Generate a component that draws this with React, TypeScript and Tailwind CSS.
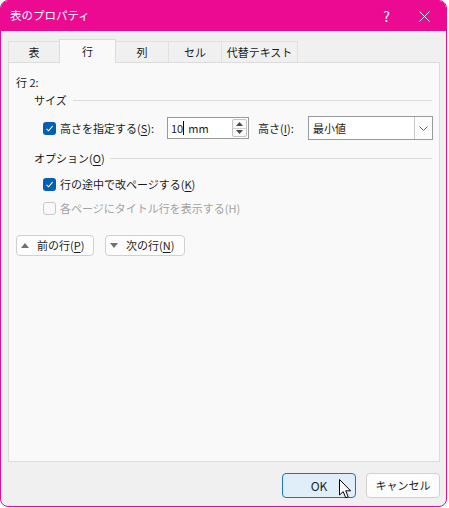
import React from "react";

const font = { fontFamily: '"Noto Sans CJK JP", "Noto Sans", sans-serif' };

function Key({ k }: { k: string }) {
  return <span className="underline underline-offset-[2px] decoration-[1px]">{k}</span>;
}

function Check({ checked, disabled }: { checked?: boolean; disabled?: boolean }) {
  if (checked) {
    return (
      <span className="flex h-[13px] w-[13px] shrink-0 items-center justify-center rounded-[3px] bg-[#005fb8]">
        <svg width="9" height="9" viewBox="0 0 9 9">
          <path d="M1.5 4.8 L3.6 6.8 L7.6 2.2" fill="none" stroke="white" strokeWidth="1.1" />
        </svg>
      </span>
    );
  }
  return (
    <span
      className={
        "h-[13px] w-[13px] shrink-0 rounded-[3px] border bg-[#f9f9f9] " +
        (disabled ? "border-[#c8c8c8]" : "border-[#868686]")
      }
    />
  );
}

function Tab({ label, active, w }: { label: string; active?: boolean; w: string }) {
  if (active) {
    return (
      <div
        className={
          "relative z-10 -mb-px flex h-[24px] items-center justify-center border border-b-0 border-[#dcdcdc] bg-[#f9f9f9] " + w
        }
      >
        {label}
      </div>
    );
  }
  return (
    <div
      className={
        "flex h-[21px] items-center justify-center border border-b-0 border-l-0 border-[#e0e0e0] bg-[#f0f0f0] first:border-l " + w
      }
    >
      {label}
    </div>
  );
}

export default function App() {
  return (
    <div className="h-[508px] w-[449px] bg-white text-[11px] text-[#1b1b1b]" style={font}>
      <div className="flex h-[507px] w-[447px] flex-col overflow-hidden rounded-[8px] border border-[#ec0a93] bg-[#f0f0f0]">
        {/* Title bar */}
        <div className="flex h-[30px] shrink-0 items-center bg-[#ec0a93] pl-[9px] text-white">
          <span className="text-[11.5px]">表のプロパティ</span>
          <span className="ml-auto mr-[29px] text-[14px]">?</span>
          <svg width="11" height="11" viewBox="0 0 11 11" className="mr-[16px]">
            <path d="M0.5 0.5 L10.5 10.5 M10.5 0.5 L0.5 10.5" stroke="white" strokeWidth="1" />
          </svg>
        </div>

        <div className="flex flex-1 flex-col pl-[7px] pt-[8px]">
          {/* Tabs */}
          <div className="flex h-[23px] items-end">
            <Tab label="表" w="w-[52px] border-l" />
            <Tab label="行" active w="w-[57px] -ml-px" />
            <Tab label="列" w="w-[53px]" />
            <Tab label="セル" w="w-[53px]" />
            <Tab label="代替テキスト" w="w-[76px]" />
          </div>

          {/* Panel */}
          <div className="flex h-[400px] w-[432px] flex-col border border-[#dcdcdc] bg-[#f9f9f9]">
            <div className="mt-[11px] flex h-[16px] items-center pl-[7px]">行 2:</div>

            <div className="mt-[2px] flex h-[16px] items-center pl-[25px] pr-[7px]">
              <span>サイズ</span>
              <div className="ml-[6px] h-px flex-1 bg-[#dcdcdc]" />
            </div>

            <div className="mt-[8px] flex h-[24px] items-center pl-[34px]">
              <div className="flex w-[124px] items-center">
                <Check checked />
                <span className="ml-[4px]">
                  高さを指定する(<Key k="S" />):
                </span>
              </div>
              <div className="flex h-[22px] w-[82px] items-center border border-[#9a9a9a] bg-white pl-[3px]">
                <span>10</span>
                <span className="h-[14px] w-px bg-black" />
                <span className="ml-[4px]">mm</span>
                <div className="ml-auto mr-px flex h-[18px] w-[15px] flex-col rounded-[2px] border border-[#c4c4c4] bg-[#fbfbfb]">
                  <div className="flex flex-1 items-center justify-center border-b border-[#d0d0d0]">
                    <svg width="7" height="4" viewBox="0 0 7 4">
                      <path d="M0 4 L3.5 0 L7 4 Z" fill="#4a4a4a" />
                    </svg>
                  </div>
                  <div className="flex flex-1 items-center justify-center">
                    <svg width="7" height="4" viewBox="0 0 7 4">
                      <path d="M0 0 L3.5 4 L7 0 Z" fill="#4a4a4a" />
                    </svg>
                  </div>
                </div>
              </div>
              <span className="ml-[9px] w-[50px]">
                高さ(<Key k="I" />):
              </span>
              <div className="flex h-[24px] w-[125px] items-center border border-[#9a9a9a] bg-white">
                <span className="pl-[4px]">最小値</span>
                <div className="ml-auto flex h-full w-[18px] items-center justify-center border-l border-[#c8c8c8] bg-[#fdfdfd]">
                  <svg width="9" height="5" viewBox="0 0 9 5">
                    <path d="M0.5 0.5 L4.5 4.5 L8.5 0.5" fill="none" stroke="#606060" strokeWidth="1" />
                  </svg>
                </div>
              </div>
            </div>

            <div className="mt-[10px] flex h-[16px] items-center pl-[25px] pr-[7px]">
              <span>
                オプション(<Key k="O" />)
              </span>
              <div className="ml-[5px] h-px flex-1 bg-[#dcdcdc]" />
            </div>

            <div className="mt-[10px] flex h-[16px] items-center pl-[34px]">
              <Check checked />
              <span className="ml-[4px]">
                行の途中で改ページする(<Key k="K" />)
              </span>
            </div>

            <div className="mt-[8px] flex h-[16px] items-center pl-[34px] text-[#a2a2a2]">
              <Check disabled />
              <span className="ml-[4px]">各ページにタイトル行を表示する(H)</span>
            </div>

            <div className="mt-[19px] flex items-center gap-[11px] pl-[7px]">
              <div className="flex h-[21px] w-[78px] items-center rounded-[4px] border border-[#d0d0d0] bg-[#fdfdfd] pl-[4px]">
                <svg width="8" height="5" viewBox="0 0 8 5">
                  <path d="M0 5 L4 0 L8 5 Z" fill="#707070" />
                </svg>
                <span className="ml-[8px]">
                  前の行(<Key k="P" />)
                </span>
              </div>
              <div className="flex h-[21px] w-[80px] items-center rounded-[4px] border border-[#d0d0d0] bg-[#fdfdfd] pl-[4px]">
                <svg width="8" height="5" viewBox="0 0 8 5">
                  <path d="M0 0 L4 5 L8 0 Z" fill="#707070" />
                </svg>
                <span className="ml-[8px]">
                  次の行(<Key k="N" />)
                </span>
              </div>
            </div>
          </div>

          {/* Footer buttons */}
          <div className="mt-[11px] flex w-[432px] justify-end gap-[10px]">
            <div className="relative flex h-[25px] w-[74px] items-center justify-center rounded-[4px] border border-[#1a73c8] bg-[#e0eef9] text-[12px]">
              OK
              <svg
                width="13"
                height="20"
                viewBox="0 0 13 20"
                className="absolute left-[56px] top-[5px]"
              >
                <path
                  d="M0.5 0.5 L0.5 16 L4.2 12.6 L6.8 18.8 L9.2 17.8 L6.7 11.8 L11.6 11.8 Z"
                  fill="white"
                  stroke="black"
                  strokeWidth="1"
                  strokeLinejoin="round"
                />
              </svg>
            </div>
            <div className="flex h-[25px] w-[74px] items-center justify-center rounded-[4px] border border-[#d0d0d0] bg-[#fdfdfd]">
              キャンセル
            </div>
          </div>
        </div>
      </div>
    </div>
  );
}
